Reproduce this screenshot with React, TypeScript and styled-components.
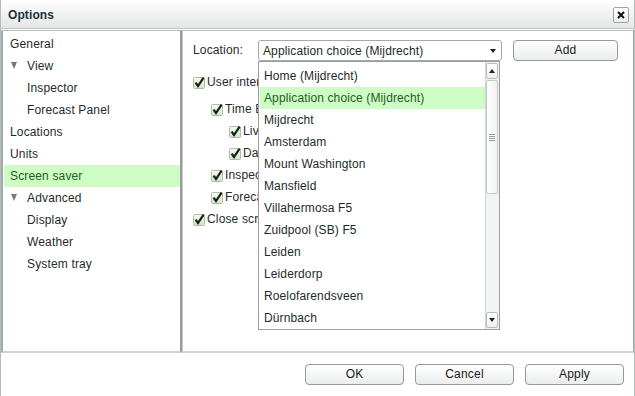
import React from "react";
import styled, { createGlobalStyle } from "styled-components";

const GlobalStyle = createGlobalStyle`
  html, body { margin: 0; padding: 0; background: #ffffff; }
  body {
    font-family: "Liberation Sans", Arial, sans-serif;
    font-size: 12px;
    color: #1e2b2b;
  }
  * { box-sizing: border-box; }
`;

const Window = styled.div`
  width: 635px;
  height: 396px;
  display: flex;
  flex-direction: column;
  border-left: 1px solid #b4bcbc;
  border-right: 1px solid #b4bcbc;
  background: #ffffff;
  overflow: hidden;
`;

const TitleBar = styled.div`
  height: 29px;
  flex: none;
  display: flex;
  align-items: center;
  justify-content: space-between;
  padding: 1px 5px 0 7px;
  background: linear-gradient(#ffffff, #e4e6e6);
  border-bottom: 1px solid #c2c6c6;
`;

const Title = styled.span`
  font-weight: bold;
  font-size: 12px;
  color: #1d2f3c;
  letter-spacing: 0.1px;
`;

const CloseButton = styled.div`
  width: 16px;
  height: 16px;
  margin-top: 1px;
  display: flex;
  align-items: center;
  justify-content: center;
  border: 1px solid #9ea4a4;
  border-radius: 2px;
  background: linear-gradient(#ffffff, #eceeee);
`;

const Main = styled.div`
  height: 324px;
  flex: none;
  display: flex;
  padding-top: 1px;
`;

const TreePanel = styled.div`
  width: 181px;
  flex: none;
  border-left: 2px solid #a3aaaa;
  border-right: 2px solid #999c9c;
  border-top: 1px solid #b8bcbc;
  border-bottom: 2px solid #d2d4d4;
  padding-top: 2px;
`;

const TreeRow = styled.div<{ $level: number; $selected?: boolean }>`
  height: 22px;
  display: flex;
  align-items: center;
  padding-left: ${(p) => (p.$level === 0 ? 6 : 23)}px;
  margin: 0 0 0 1px;
  background: ${(p) => (p.$selected ? "#cdfcc4" : "transparent")};
  color: ${(p) => (p.$selected ? "#1f5f1f" : "#1e2b2b")};
  letter-spacing: 0.15px;
  position: relative;
`;

const Expander = styled.span`
  position: absolute;
  left: 7px;
  top: 7px;
  width: 0;
  height: 0;
  border-left: 3.5px solid transparent;
  border-right: 3.5px solid transparent;
  border-top: 7px solid #74787a;
`;

const SettingsPanel = styled.div`
  flex: 1;
  border-left: 1px solid #c6caca;
  border-right: 1px solid #a0a4a4;
  border-top: 1px solid #b8bcbc;
  border-bottom: 2px solid #d2d4d4;
  padding: 9px 0 0 10px;
`;

const LocationRow = styled.div`
  display: flex;
  align-items: center;
  height: 21px;
`;

const Label = styled.span`
  width: 65px;
  letter-spacing: 0.15px;
  margin-top: -2px;
`;

const ComboWrap = styled.div`
  position: relative;
  width: 244px;
  height: 21px;
`;

const Combo = styled.div`
  width: 100%;
  height: 100%;
  display: flex;
  align-items: center;
  justify-content: space-between;
  padding: 1px 5px 0 4px;
  border: 1px solid #a4a8a8;
  border-radius: 3px;
  background: #ffffff;
  letter-spacing: 0.12px;
`;

const DownArrow = styled.span<{ $size?: number }>`
  width: 0;
  height: 0;
  border-left: ${(p) => (p.$size ?? 7) / 2}px solid transparent;
  border-right: ${(p) => (p.$size ?? 7) / 2}px solid transparent;
  border-top: ${(p) => Math.round((p.$size ?? 7) / 2)}px solid #202020;
`;

const UpArrow = styled.span`
  width: 0;
  height: 0;
  border-left: 3.5px solid transparent;
  border-right: 3.5px solid transparent;
  border-bottom: 4px solid #202020;
`;

const DropList = styled.div`
  position: absolute;
  top: 100%;
  left: 0;
  width: 242px;
  height: 269px;
  display: flex;
  border: 1px solid #9a9e9e;
  background: #ffffff;
  z-index: 5;
`;

const DropItems = styled.div`
  flex: 1;
  padding: 3px 0 0 1px;
`;

const DropItem = styled.div<{ $selected?: boolean }>`
  height: 22px;
  display: flex;
  align-items: center;
  padding-left: 4px;
  letter-spacing: 0.12px;
  background: ${(p) => (p.$selected ? "#cdfcc4" : "transparent")};
  color: ${(p) => (p.$selected ? "#1f5f1f" : "#1e2b2b")};
`;

const ScrollBar = styled.div`
  width: 14px;
  flex: none;
  display: flex;
  flex-direction: column;
  padding: 1px 1px 1px 0;
  background: #f2f3f3;
  border-left: 1px solid #d0d4d4;
`;

const ScrollButton = styled.div`
  height: 16px;
  flex: none;
  display: flex;
  align-items: center;
  justify-content: center;
  border: 1px solid #b8bcbc;
  border-radius: 2px;
  background: linear-gradient(#ffffff, #eef0f0);
`;

const ScrollTrack = styled.div`
  flex: 1;
  padding: 1px 0;
`;

const ScrollThumb = styled.div`
  height: 114px;
  display: flex;
  align-items: center;
  justify-content: center;
  border: 1px solid #c4c8c8;
  border-radius: 2px;
  background: linear-gradient(90deg, #ffffff, #f0f2f2);
`;

const Grip = styled.div`
  width: 6px;
  height: 7px;
  background: repeating-linear-gradient(#9a9e9e 0 1px, transparent 1px 2px);
`;

const Button = styled.div<{ $width?: number }>`
  width: ${(p) => p.$width ?? 99}px;
  height: 21px;
  display: flex;
  align-items: center;
  justify-content: center;
  border: 1px solid #959999;
  border-radius: 4px;
  background: linear-gradient(#fefefe, #ebeded);
  color: #1a1a1a;
  letter-spacing: 0.2px;
`;

const AddButton = styled(Button)`
  margin-left: 11px;
  margin-top: -1px;
`;

const CheckList = styled.div`
  margin-top: 10px;
  display: flex;
  flex-direction: column;
`;

const CheckRow = styled.div<{ $level: number; $gap?: number }>`
  height: 22px;
  display: flex;
  align-items: center;
  gap: 1px;
  padding-left: ${(p) => p.$level * 18}px;
  margin-top: ${(p) => p.$gap ?? 0}px;
  letter-spacing: 0.15px;
  white-space: nowrap;
`;

const Footer = styled.div`
  flex: 1;
  display: flex;
  align-items: center;
  justify-content: flex-end;
  gap: 11px;
  padding: 0 10px 1px 0;
`;

const CheckIcon = () => (
  <svg width="13" height="13" viewBox="0 0 13 13">
    <defs>
      <linearGradient id="cbg" x1="0" y1="0" x2="0" y2="1">
        <stop offset="0" stopColor="#f6faf2" />
        <stop offset="1" stopColor="#d6e4d0" />
      </linearGradient>
    </defs>
    <rect x="0.5" y="1.5" width="11" height="11" rx="1" fill="url(#cbg)" stroke="#aebfa6" />
    <path d="M2.6 6.6 L5 10 L10.6 1.6" fill="none" stroke="#142414" strokeWidth="2.2" strokeLinejoin="miter" />
  </svg>
);

const CloseIcon = () => (
  <svg width="8" height="8" viewBox="0 0 8 8">
    <path d="M1 1 L7 7 M7 1 L1 7" stroke="#111" strokeWidth="2" />
  </svg>
);

const tree: { label: string; level: number; expander?: boolean; selected?: boolean }[] = [
  { label: "General", level: 0 },
  { label: "View", level: 1, expander: true },
  { label: "Inspector", level: 1 },
  { label: "Forecast Panel", level: 1 },
  { label: "Locations", level: 0 },
  { label: "Units", level: 0 },
  { label: "Screen saver", level: 0, selected: true },
  { label: "Advanced", level: 1, expander: true },
  { label: "Display", level: 1 },
  { label: "Weather", level: 1 },
  { label: "System tray", level: 1 },
];

const locations = [
  "Home (Mijdrecht)",
  "Application choice (Mijdrecht)",
  "Mijdrecht",
  "Amsterdam",
  "Mount Washington",
  "Mansfield",
  "Villahermosa F5",
  "Zuidpool (SB) F5",
  "Leiden",
  "Leiderdorp",
  "Roelofarendsveen",
  "Dürnbach",
];

const checks: { label: string; level: number; gap?: number }[] = [
  { label: "User interaction", level: 0 },
  { label: "Time Bar", level: 1, gap: 5 },
  { label: "Live", level: 2 },
  { label: "Day", level: 2 },
  { label: "Inspector", level: 1 },
  { label: "Forecast Panel", level: 1 },
  { label: "Close screen saver", level: 0 },
];

export default function App() {
  return (
    <>
      <GlobalStyle />
      <Window>
        <TitleBar>
          <Title>Options</Title>
          <CloseButton>
            <CloseIcon />
          </CloseButton>
        </TitleBar>
        <Main>
          <TreePanel>
            {tree.map((t) => (
              <TreeRow key={t.label} $level={t.level} $selected={t.selected}>
                {t.expander && <Expander />}
                {t.label}
              </TreeRow>
            ))}
          </TreePanel>
          <SettingsPanel>
            <LocationRow>
              <Label>Location:</Label>
              <ComboWrap>
                <Combo>
                  <span>Application choice (Mijdrecht)</span>
                  <DownArrow />
                </Combo>
                <DropList>
                  <DropItems>
                    {locations.map((l, i) => (
                      <DropItem key={l} $selected={i === 1}>
                        {l}
                      </DropItem>
                    ))}
                  </DropItems>
                  <ScrollBar>
                    <ScrollButton>
                      <UpArrow />
                    </ScrollButton>
                    <ScrollTrack>
                      <ScrollThumb>
                        <Grip />
                      </ScrollThumb>
                    </ScrollTrack>
                    <ScrollButton>
                      <DownArrow />
                    </ScrollButton>
                  </ScrollBar>
                </DropList>
              </ComboWrap>
              <AddButton $width={105}>Add</AddButton>
            </LocationRow>
            <CheckList>
              {checks.map((c) => (
                <CheckRow key={c.label} $level={c.level} $gap={c.gap}>
                  <CheckIcon />
                  {c.label}
                </CheckRow>
              ))}
            </CheckList>
          </SettingsPanel>
        </Main>
        <Footer>
          <Button>OK</Button>
          <Button>Cancel</Button>
          <Button>Apply</Button>
        </Footer>
      </Window>
    </>
  );
}
